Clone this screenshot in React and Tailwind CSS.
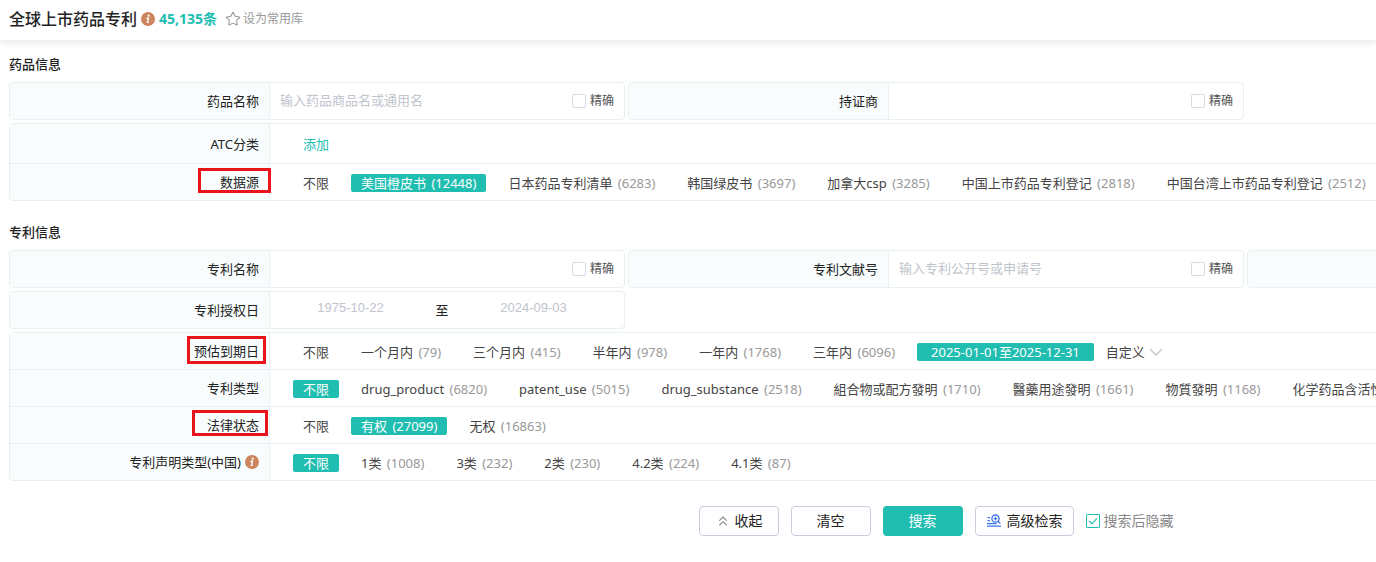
import React, { useState } from 'react';
import { ChevronsUp, Star } from 'lucide-react';

const sources = [
    { name: '不限' },
    { name: '美国橙皮书', count: 12448 },
    { name: '日本药品专利清单', count: 6283 },
    { name: '韩国绿皮书', count: 3697 },
    { name: '加拿大csp', count: 3285 },
    { name: '中国上市药品专利登记', count: 2818 },
    { name: '中国台湾上市药品专利登记', count: 2512 },
];

const expiries = [
    { name: '不限' },
    { name: '一个月内', count: 79 },
    { name: '三个月内', count: 415 },
    { name: '半年内', count: 978 },
    { name: '一年内', count: 1768 },
    { name: '三年内', count: 6096 },
    { name: '2025-01-01至2025-12-31', wide: true },
];

const patentTypes = [
    { name: '不限' },
    { name: 'drug_product', count: 6820 },
    { name: 'patent_use', count: 5015 },
    { name: 'drug_substance', count: 2518 },
    { name: '組合物或配方發明', count: 1710 },
    { name: '醫藥用途發明', count: 1661 },
    { name: '物質發明', count: 1168 },
    { name: '化学药品含活性成分' },
];

const legalStates = [
    { name: '不限' },
    { name: '有权', count: 27099 },
    { name: '无权', count: 16863 },
];

const declarations = [
    { name: '不限' },
    { name: '1类', count: 1008 },
    { name: '3类', count: 232 },
    { name: '2类', count: 230 },
    { name: '4.2类', count: 224 },
    { name: '4.1类', count: 87 },
];

function InfoIcon() {
    return (
        <svg className="w-3.5 h-3.5 shrink-0" viewBox="0 0 14 14" aria-hidden="true">
            <circle cx="7" cy="7" r="7" fill="#cd8560" />
            <circle cx="7.7" cy="3.7" r="1.1" fill="#fff" />
            <path d="M5.4 6.2h2.1L6.5 10.4h1.3" fill="none" stroke="#fff" strokeWidth="1.4" />
        </svg>
    );
}

function AdvancedIcon() {
    return (
        <svg className="w-4 h-4 shrink-0" viewBox="0 0 16 16" fill="none" stroke="#3d73f2" strokeWidth="1.3" aria-hidden="true">
            <circle cx="9.5" cy="5.6" r="3.6" />
            <path d="M7.8 5.6h3.4M9.5 3.9v3.4M12 8.2l2.4 2.4" />
            <path d="M1.5 4.6h2.5M1.5 7.6h2.5M1 10.6h9.5M1 13.2h14" />
        </svg>
    );
}

function Label({ htmlFor, children }) {
    const Tag = htmlFor ? 'label' : 'div';
    return (
        <Tag
            htmlFor={htmlFor}
            className="relative flex w-[260px] shrink-0 items-center justify-end gap-1 border-r border-[#e6f1f1] bg-[#f8fcfd] pr-[10px] text-[#222]"
        >
            {children}
        </Tag>
    );
}

function Options({ items, initial, children }) {
    const [active, setActive] = useState(initial);

    return (
        <div className="flex items-center gap-3 pt-0.5 pl-[23px] whitespace-nowrap">
            {items.map((item, i) => (
                <button
                    key={item.name}
                    type="button"
                    onClick={() => setActive(i)}
                    className={`h-[18px] leading-[18px] ${item.wide ? 'px-3.5' : 'px-[10px]'} ${
                        i === active ? 'rounded-[2px] bg-[#20bdb1] text-white' : 'text-[#444]'
                    }`}
                >
                    {item.name}
                    {item.count && <span className={i === active ? 'ml-0.5' : 'ml-0.5 text-[#999]'}> ({item.count})</span>}
                </button>
            ))}
            {children}
        </div>
    );
}

function TextField({ id, label, placeholder }) {
    return (
        <div className="flex h-[38px] overflow-hidden rounded border border-[#e6f1f1]">
            <Label htmlFor={id}>{label}</Label>
            <input
                id={id}
                type="text"
                placeholder={placeholder}
                className="min-w-0 flex-1 px-[10px] pb-0.5 placeholder:text-[#c0c4cc] focus:outline-none"
            />
            <label className="flex items-center gap-1 pr-[10px] text-xs text-[#555]">
                <input type="checkbox" className="h-3.5 w-3.5 appearance-none rounded-[2px] border border-[#d9dbe6] bg-white checked:bg-[#20bdb1]" />
                精确
            </label>
        </div>
    );
}

export default function App() {
    const [hideAfter, setHideAfter] = useState(true);

    return (
        <div className="overflow-hidden bg-white pb-6 font-['Noto_Sans','Noto_Sans_CJK_SC',sans-serif] text-[13px] leading-5 text-[#222]">
            {/* Title bar */}
            <header className="flex h-10 items-center pb-0.5 pl-[9px] shadow-[0_2px_8px_rgba(0,0,0,0.1)]">
                <h1 className="text-base font-medium">全球上市药品专利</h1>
                <span className="ml-1"><InfoIcon /></span>
                <span className="ml-1 text-sm font-bold text-[#20bdb1]">45,135条</span>
                <button type="button" className="ml-2 flex items-center gap-0.5 text-xs text-[#999]">
                    <Star size={16} strokeWidth={1.6} />
                    设为常用库
                </button>
            </header>

            <main className="min-w-[1872px] px-[9px] pt-3.5">
                {/* Drug info */}
                <h2 className="font-medium">药品信息</h2>
                <div className="mt-2 grid grid-cols-3 gap-[3px]">
                    <TextField id="drug-name" label="药品名称" placeholder="输入药品商品名或通用名" />
                    <TextField id="holder" label="持证商" />
                </div>
                <div className="mt-[3px] divide-y divide-[#e6f1f1] rounded border border-[#e6f1f1]">
                    <div className="flex h-10">
                        <Label>ATC分类</Label>
                        <button type="button" className="ml-[33px] text-[#20bdb1]">添加</button>
                    </div>
                    <div className="flex h-9">
                        <Label>
                            数据源
                            <span className="absolute top-1 -right-0.5 z-10 h-[25px] w-[73px] border-3 border-[#ec141c]" />
                        </Label>
                        <Options items={sources} initial={1} />
                    </div>
                </div>

                {/* Patent info */}
                <h2 className="mt-[21px] font-medium">专利信息</h2>
                <div className="mt-2 grid grid-cols-3 gap-[3px]">
                    <TextField id="patent-name" label="专利名称" />
                    <TextField id="patent-no" label="专利文献号" placeholder="输入专利公开号或申请号" />
                    <div className="flex overflow-hidden rounded border border-[#e6f1f1]">
                        <Label />
                    </div>
                    <div className="flex h-[38px] overflow-hidden rounded border border-[#e6f1f1]">
                        <Label htmlFor="grant-from">专利授权日</Label>
                        <div className="flex min-w-0 flex-1 items-center pr-[10px]">
                            <input
                                id="grant-from"
                                type="text"
                                placeholder="1975-10-22"
                                className="min-w-0 flex-1 pb-1 text-center font-['Liberation_Sans',sans-serif] placeholder:text-[#c0c4cc] focus:outline-none"
                            />
                            <span className="w-[22px] text-center">至</span>
                            <input
                                type="text"
                                aria-label="专利授权日截止"
                                placeholder="2024-09-03"
                                className="min-w-0 flex-1 pb-1 text-center font-['Liberation_Sans',sans-serif] placeholder:text-[#c0c4cc] focus:outline-none"
                            />
                        </div>
                    </div>
                </div>
                <div className="mt-[3px] divide-y divide-[#e6f1f1] rounded border border-[#e6f1f1]">
                    <div className="flex h-[37px]">
                        <Label>
                            预估到期日
                            <span className="absolute top-[3px] right-[3px] z-10 h-7 w-[79px] border-3 border-[#ec141c]" />
                        </Label>
                        <Options items={expiries} initial={6}>
                            <button type="button" className="flex items-center gap-1 text-[#444]">
                                自定义
                                <svg className="h-2 w-3.5" viewBox="0 0 14 8" fill="none" stroke="#c4c4c4" strokeWidth="1.4">
                                    <path d="M1 1l6 6 6-6" />
                                </svg>
                            </button>
                        </Options>
                    </div>
                    <div className="flex h-[37px]">
                        <Label>专利类型</Label>
                        <Options items={patentTypes} initial={0} />
                    </div>
                    <div className="flex h-[37px]">
                        <Label>
                            法律状态
                            <span className="absolute top-[3px] right-px z-10 h-[26px] w-[76px] border-3 border-[#ec141c]" />
                        </Label>
                        <Options items={legalStates} initial={1} />
                    </div>
                    <div className="flex h-9">
                        <Label>
                            专利声明类型(中国)
                            <InfoIcon />
                        </Label>
                        <Options items={declarations} initial={0} />
                    </div>
                </div>

                {/* Actions */}
                <div className="mt-[25px] flex items-center justify-center gap-3 text-sm">
                    <button type="button" className="flex h-[30px] w-20 items-center justify-center gap-1 rounded border border-[#c8cedb]">
                        <ChevronsUp size={16} strokeWidth={1.6} className="text-[#888]" />
                        收起
                    </button>
                    <button type="button" className="h-[30px] w-20 rounded border border-[#c8cedb]">清空</button>
                    <button type="button" className="h-[30px] w-20 rounded bg-[#20bdb1] text-white">搜索</button>
                    <button type="button" className="flex h-[30px] items-center gap-[5px] rounded border border-[#c8cedb] px-[10px]">
                        <AdvancedIcon />
                        高级检索
                    </button>
                    <label className="flex items-center gap-1 text-[#888]">
                        <span className="grid h-3.5 w-3.5">
                            <input
                                type="checkbox"
                                checked={hideAfter}
                                onChange={(e) => setHideAfter(e.target.checked)}
                                className="col-start-1 row-start-1 h-3.5 w-3.5 appearance-none rounded-[1px] border border-[#20bdb1]"
                            />
                            {hideAfter && (
                                <svg className="pointer-events-none col-start-1 row-start-1 h-3.5 w-3.5" viewBox="0 0 14 14" fill="none" stroke="#20bdb1" strokeWidth="1.2">
                                    <path d="M3.2 7l2.6 2.6 5-5" />
                                </svg>
                            )}
                        </span>
                        搜索后隐藏
                    </label>
                </div>
            </main>
        </div>
    );
}
